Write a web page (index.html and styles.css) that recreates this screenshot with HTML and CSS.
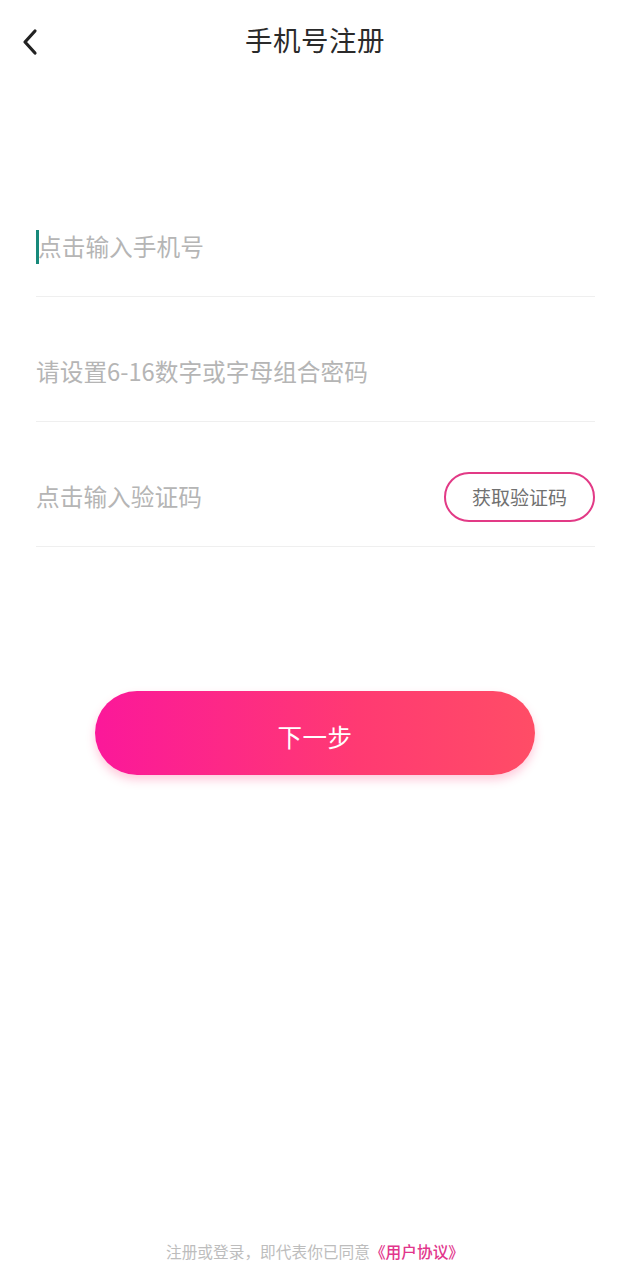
FILE: index.html
```html
<!DOCTYPE html>
<html lang="zh">
<head>
<meta charset="utf-8">
<title>手机号注册</title>
<link rel="stylesheet" href="styles.css">
</head>
<body>
<div class="page">
  <header class="header">
    <button class="back" aria-label="返回">
      <svg width="18" height="28" viewBox="0 0 18 28"><path d="M14 3 L4 14 L14 25" fill="none" stroke="#222" stroke-width="3.2" stroke-linecap="round" stroke-linejoin="round"/></svg>
    </button>
    <h1 class="title">手机号注册</h1>
  </header>

  <main class="form">
    <div class="row">
      <span class="cursor"></span><span class="placeholder">点击输入手机号</span>
    </div>
    <div class="row">
      <span class="placeholder">请设置6-16数字或字母组合密码</span>
    </div>
    <div class="row">
      <span class="placeholder">点击输入验证码</span>
      <button class="code-btn">获取验证码</button>
    </div>
  </main>

  <div class="next-wrap">
    <button class="next">下一步</button>
  </div>

  <footer class="footer">注册或登录，即代表你已同意<span class="link">《用户协议》</span></footer>
</div>
</body>
</html>
```

FILE: styles.css
```css
* { box-sizing: border-box; }
html, body { margin: 0; padding: 0; background: #fff; }
body {
  font-family: "Noto Sans CJK SC", "Noto Sans", sans-serif;
  color: #333;
}
.page {
  min-height: 1280px;
  display: flex;
  flex-direction: column;
}
.header {
  height: 84px;
  display: flex;
  align-items: center;
  justify-content: center;
  position: relative;
  padding-bottom: 4px;
}
.back {
  position: absolute;
  left: 19px;
  top: 27px;
  border: 0;
  background: none;
  padding: 0;
  width: 22px;
  height: 30px;
  display: flex;
  align-items: center;
  justify-content: center;
}
.title {
  margin: 0;
  font-size: 27.5px;
  font-weight: 400;
  color: #2a2a2a;
  line-height: 1;
  letter-spacing: 0.5px;
}
.form {
  padding: 113px 35px 0 36px;
  display: flex;
  flex-direction: column;
  gap: 25px;
}
.row {
  height: 100px;
  border-bottom: 1px solid #efefef;
  display: flex;
  align-items: center;
}
.placeholder {
  font-size: 23.7px;
  color: #b5b5b5;
  line-height: 1;
}
.cursor {
  display: inline-block;
  width: 3px;
  height: 34px;
  background: #17897a;
  margin-right: -1px;
}
.code-btn {
  margin-left: auto;
  width: 151px;
  height: 50px;
  border: 2px solid #e23a86;
  border-radius: 25px;
  background: #fff;
  font-family: inherit;
  font-size: 19px;
  color: #707070;
  padding: 0;
}
.next-wrap {
  padding-top: 144px;
  display: flex;
  justify-content: center;
}
.next {
  width: 440px;
  height: 84px;
  border: 0;
  border-radius: 42px;
  background: linear-gradient(90deg, #fb189a 0%, #ff3a72 60%, #ff4d66 100%);
  box-shadow: 0 5px 10px rgba(255, 70, 130, 0.28);
  color: #fff;
  font-family: inherit;
  font-size: 24.5px;
  letter-spacing: 0.5px;
  padding: 6px 0 0;
}
.footer {
  margin-top: auto;
  padding-bottom: 18px;
  text-align: center;
  font-size: 15.7px;
  line-height: 20px;
  color: #bdbdbd;
}
.link { color: #e2368c; font-weight: 500; }
```
